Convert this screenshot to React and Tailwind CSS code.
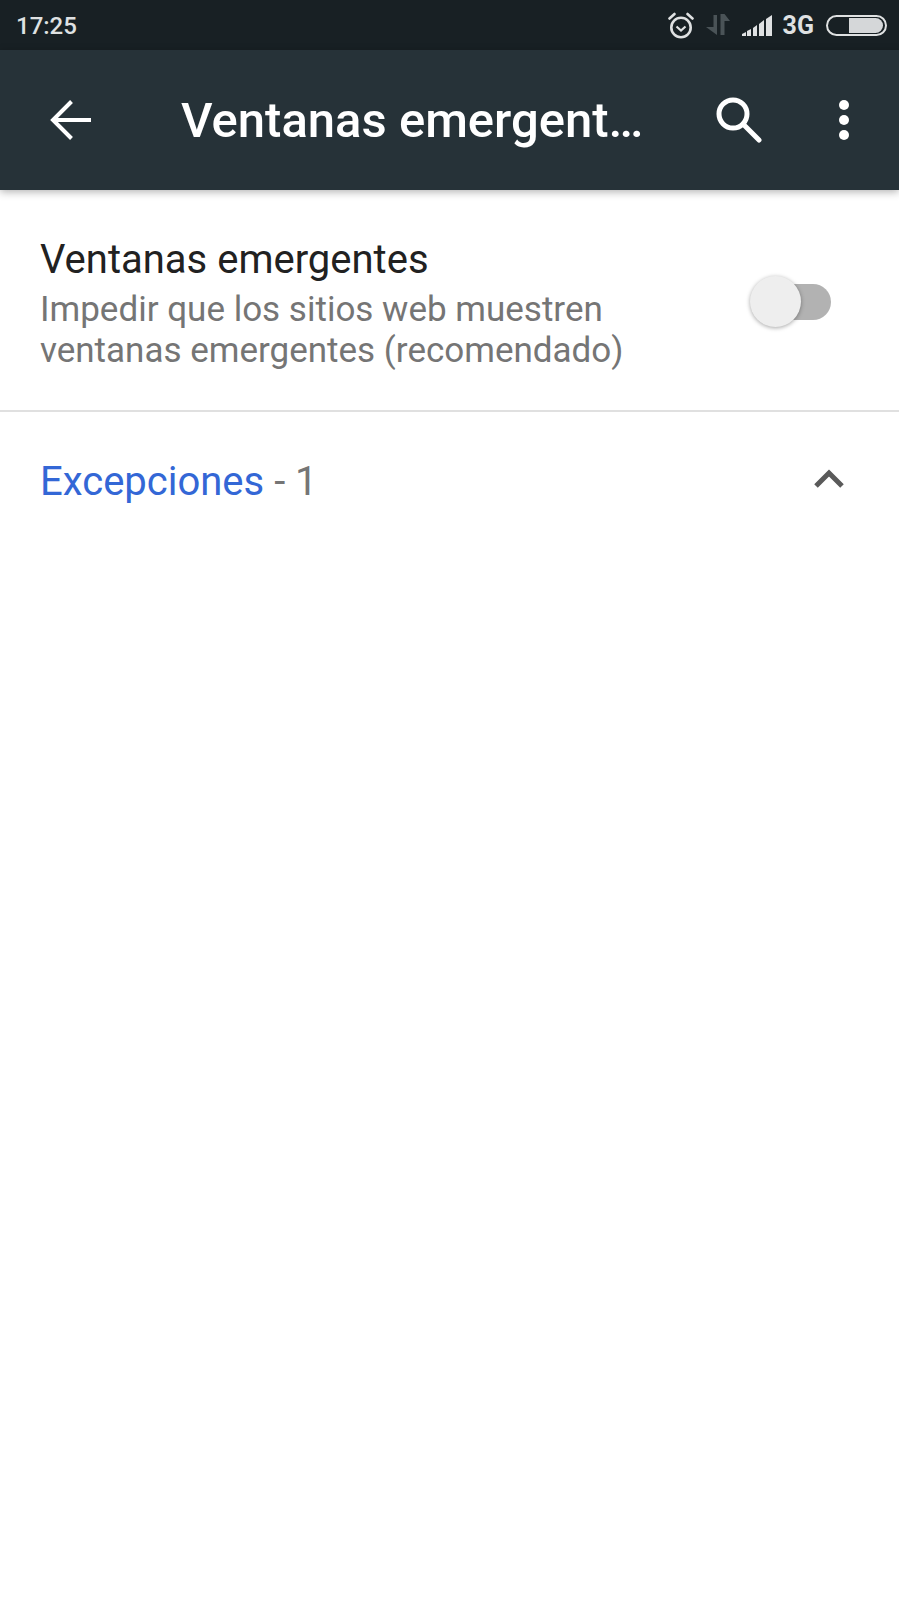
import React from 'react';

const roboto = { fontFamily: 'Roboto, sans-serif' };

const StatusIcons = () => (
    <div className="flex items-center">
        {/* alarm */}
        <svg width="26" height="27" viewBox="0 0 26 27" fill="none" stroke="#dfe1e2" strokeWidth="2.600">
            <circle cx="13" cy="15.500" r="9.700" />
            <path d="M8.500 14.500l4.500 4 4.500-4" strokeWidth="2.200" />
            <path d="M1.500 6.500L6.500 2M24.500 6.500L19.500 2" strokeLinecap="round" />
        </svg>
        {/* data arrows */}
        <svg className="ml-[12px]" width="24" height="22" viewBox="0 0 24 22" fill="#4a5357">
            <path d="M7.500 1h3.500v20L0 13h7.500z" />
            <path d="M14.500 0h4l5.500 7h-5.500v14h-4z" />
        </svg>
        {/* signal */}
        <svg className="ml-[12px]" width="30" height="22" viewBox="0 0 30 22" fill="#dfe1e2">
            <path d="M0 22v-2l4-2v4z" />
            <path d="M5 22v-5l4-2v7z" />
            <path d="M11 22v-8l4-3v11z" />
            <path d="M17 22V10l5-4v16z" />
            <path d="M24 22V5l6-4v21z" />
        </svg>
        <span className="ml-[11px] text-[25px] font-bold leading-none text-[#dfe1e2]" style={roboto}>3G</span>
        {/* battery */}
        <div className="relative ml-[12px] h-[21px] w-[61px] rounded-full border-2 border-[#dfe1e2]">
            <div className="absolute bottom-[1px] left-[21px] right-[2px] top-[1px] rounded-r-full bg-[#d5d7d9]" />
        </div>
    </div>
);

const App = () => (
    <div className="flex min-h-[1599px] w-[899px] flex-col bg-white" style={roboto}>
        <div className="flex h-[50px] items-center justify-between bg-[#182024] pl-4 pr-3">
            <span className="mt-px text-[24px] font-medium leading-none text-[#dfe1e2]">17:25</span>
            <StatusIcons />
        </div>

        <header className="relative flex h-[140px] items-center bg-[#263238] shadow-[0_2px_8px_rgba(0,0,0,0.3)]">
            <svg className="ml-[50px] shrink-0" width="41" height="40" viewBox="0 0 41 40" fill="none" stroke="white" strokeWidth="4">
                <path d="M41 20H3M21.500 1.500L3 20l18.500 18.500" />
            </svg>
            <h1 className="ml-[90px] mt-[2px] w-[472px] truncate text-[49px] font-medium leading-[60px] text-white">
                Ventanas emergentes
            </h1>
            <svg className="ml-[63px] shrink-0" width="46" height="46" viewBox="0 0 46 46" fill="none" stroke="white" strokeWidth="5">
                <circle cx="17" cy="17" r="14" />
                <path d="M27 27l16 16" strokeLinecap="round" />
            </svg>
            <div className="ml-[77px] flex flex-col gap-[5px]">
                <span className="h-[10px] w-[10px] rounded-full bg-white" />
                <span className="h-[10px] w-[10px] rounded-full bg-white" />
                <span className="h-[10px] w-[10px] rounded-full bg-white" />
            </div>
        </header>

        <section className="flex h-[222px] items-center justify-between border-b-2 border-[#e0e0e0] pl-[40px] pr-[68px]">
            <div className="pt-[8px]">
                <div className="text-[40px] leading-[46px] text-[#212121]">Ventanas emergentes</div>
                <div className="mt-[6px] text-[35px] leading-[41px] text-[#757575]">
                    Impedir que los sitios web muestren<br />ventanas emergentes (recomendado)
                </div>
            </div>
            <div className="relative mt-[3px] h-[36px] w-[59px] rounded-full bg-[#b2b2b2]">
                <div className="absolute left-[-22px] top-[-8px] h-[51px] w-[51px] rounded-full bg-[#eeeeee] shadow-[0_1px_4px_rgba(0,0,0,0.35)]" />
            </div>
        </section>

        <div className="flex h-[134px] items-center justify-between pl-[40px] pr-[55px]">
            <div className="pt-[6px] text-[40px] leading-none text-[#757575]">
                <span className="text-[#3367d6]">Excepciones</span> - 1
            </div>
            <svg width="30" height="20" viewBox="0 0 30 20" fill="none" stroke="#5a5a5a" strokeWidth="5">
                <path d="M2 17L15 4l13 13" />
            </svg>
        </div>
    </div>
);

export default App;
